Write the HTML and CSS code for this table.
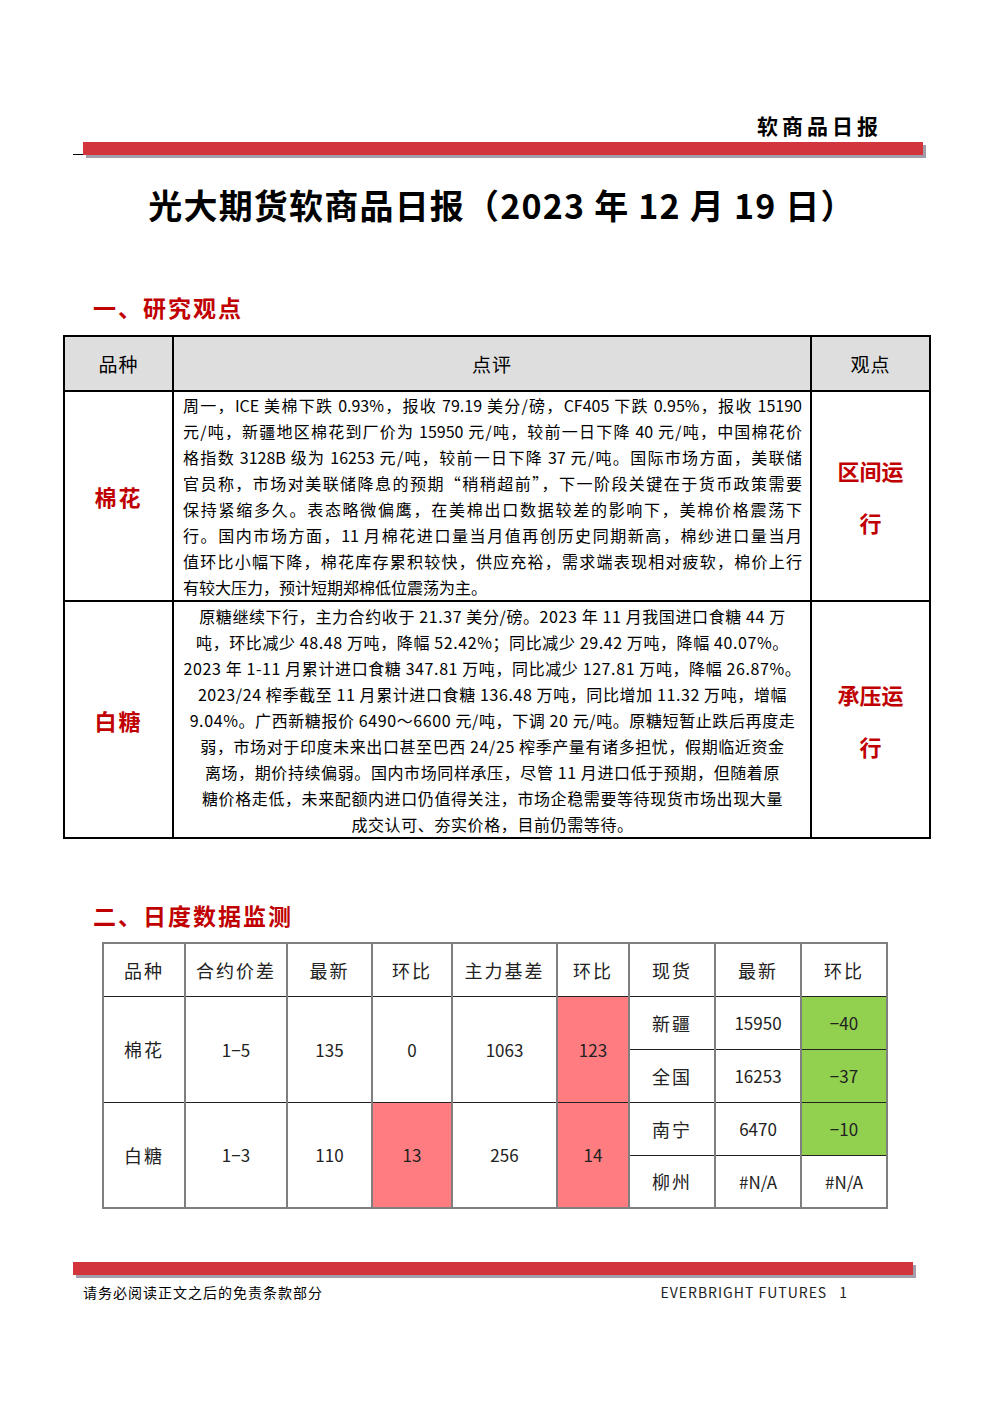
FILE: index.html
```html
<!DOCTYPE html>
<html lang="zh-CN">
<head>
  <meta charset="UTF-8" />
  <meta name="viewport" content="width=device-width, initial-scale=1.0"/>
  <title>光大期货软商品日报</title>
  <link rel="stylesheet" href="styles.css">
</head>
<body>
  <div class="page">
    <!-- Page header -->
    <header class="page-header">
      <div class="report-tag">软商品日报</div>
      <div class="bar-row">
        <span class="bar-dash"></span>
        <div class="red-bar"></div>
      </div>
    </header>

    <h1 class="title">光大期货软商品日报（2023 年 12 月 19 日）</h1>

    <!-- Research view -->
    <h2 class="section-title">一、研究观点</h2>
    <table class="view-table">
      <colgroup>
        <col class="col-kind">
        <col class="col-comment">
        <col class="col-view">
      </colgroup>
      <thead>
        <tr>
          <th>品种</th>
          <th>点评</th>
          <th>观点</th>
        </tr>
      </thead>
      <tbody>
        <tr class="row-cotton">
          <td class="kind">棉花</td>
          <td class="comment justify">
            <span>周一，ICE 美棉下跌 0.93%，报收 79.19 美分/磅，CF405 下跌 0.95%，报收 15190</span>
            <span>元/吨，新疆地区棉花到厂价为 15950 元/吨，较前一日下降 40 元/吨，中国棉花价</span>
            <span>格指数 3128B 级为 16253 元/吨，较前一日下降 37 元/吨。国际市场方面，美联储</span>
            <span>官员称，市场对美联储降息的预期“稍稍超前”，下一阶段关键在于货币政策需要</span>
            <span>保持紧缩多久。表态略微偏鹰，在美棉出口数据较差的影响下，美棉价格震荡下</span>
            <span>行。国内市场方面，11 月棉花进口量当月值再创历史同期新高，棉纱进口量当月</span>
            <span>值环比小幅下降，棉花库存累积较快，供应充裕，需求端表现相对疲软，棉价上行</span>
            <span class="last">有较大压力，预计短期郑棉低位震荡为主。</span>
          </td>
          <td class="view">区间运<br>行</td>
        </tr>
        <tr class="row-sugar">
          <td class="kind">白糖</td>
          <td class="comment centered">
            <span>原糖继续下行，主力合约收于 21.37 美分/磅。2023 年 11 月我国进口食糖 44 万</span>
            <span>吨，环比减少 48.48 万吨，降幅 52.42%；同比减少 29.42 万吨，降幅 40.07%。</span>
            <span>2023 年 1-11 月累计进口食糖 347.81 万吨，同比减少 127.81 万吨，降幅 26.87%。</span>
            <span>2023/24 榨季截至 11 月累计进口食糖 136.48 万吨，同比增加 11.32 万吨，增幅</span>
            <span>9.04%。广西新糖报价 6490～6600 元/吨，下调 20 元/吨。原糖短暂止跌后再度走</span>
            <span>弱，市场对于印度未来出口甚至巴西 24/25 榨季产量有诸多担忧，假期临近资金</span>
            <span>离场，期价持续偏弱。国内市场同样承压，尽管 11 月进口低于预期，但随着原</span>
            <span>糖价格走低，未来配额内进口仍值得关注，市场企稳需要等待现货市场出现大量</span>
            <span>成交认可、夯实价格，目前仍需等待。</span>
          </td>
          <td class="view">承压运<br>行</td>
        </tr>
      </tbody>
    </table>

    <!-- Daily data -->
    <h2 class="section-title second">二、日度数据监测</h2>
    <table class="data-table">
      <colgroup>
        <col style="width: 82px">
        <col style="width: 102px">
        <col style="width: 85px">
        <col style="width: 80px">
        <col style="width: 105px">
        <col style="width: 72px">
        <col style="width: 86px">
        <col style="width: 86px">
        <col style="width: 86px">
      </colgroup>
      <thead>
        <tr>
          <th>品种</th>
          <th>合约价差</th>
          <th>最新</th>
          <th>环比</th>
          <th>主力基差</th>
          <th>环比</th>
          <th>现货</th>
          <th>最新</th>
          <th>环比</th>
        </tr>
      </thead>
      <tbody>
        <tr>
          <td rowspan="2" class="cn">棉花</td>
          <td rowspan="2">1−5</td>
          <td rowspan="2">135</td>
          <td rowspan="2">0</td>
          <td rowspan="2">1063</td>
          <td rowspan="2" class="up">123</td>
          <td class="cn">新疆</td>
          <td>15950</td>
          <td class="down">−40</td>
        </tr>
        <tr>
          <td class="cn">全国</td>
          <td>16253</td>
          <td class="down">−37</td>
        </tr>
        <tr>
          <td rowspan="2" class="cn">白糖</td>
          <td rowspan="2">1−3</td>
          <td rowspan="2">110</td>
          <td rowspan="2" class="up">13</td>
          <td rowspan="2">256</td>
          <td rowspan="2" class="up">14</td>
          <td class="cn">南宁</td>
          <td>6470</td>
          <td class="down">−10</td>
        </tr>
        <tr>
          <td class="cn">柳州</td>
          <td>#N/A</td>
          <td>#N/A</td>
        </tr>
      </tbody>
    </table>

    <!-- Footer -->
    <footer class="page-footer">
      <div class="red-bar footer-bar"></div>
      <div class="footer-text">
        <span class="notice">请务必阅读正文之后的免责条款部分</span>
        <span class="brand">EVERBRIGHT FUTURES<span class="page-no">1</span></span>
      </div>
    </footer>
  </div>
</body>
</html>
```

FILE: styles.css
```css
* {
  box-sizing: border-box;
  margin: 0;
  padding: 0;
}

body {
  font-family: "Noto Sans CJK SC", "Noto Sans", sans-serif;
  background: #fff;
  color: #000;
}

.page {
  width: 992px;
  min-height: 1403px;
  padding-top: 112px;
}

/* Header */
.report-tag {
  text-align: right;
  padding-right: 110px;
  font-size: 21px;
  line-height: 26px;
  font-weight: bold;
  letter-spacing: 4px;
}

.bar-row {
  display: flex;
  align-items: flex-end;
  margin-top: 4px;
  padding-left: 73px;
}

.bar-dash {
  width: 10px;
  height: 1px;
  background: #000;
}

.red-bar {
  width: 840px;
  height: 13px;
  background: #d2363c;
  box-shadow: 3px 3px 0 #a29dab;
}

.title {
  margin-top: 28px;
  padding-left: 12px;
  text-align: center;
  font-size: 34px;
  line-height: 44px;
  font-weight: bold;
  letter-spacing: 1.2px;
}

.section-title {
  margin: 65px 0 13px 93px;
  font-size: 23px;
  line-height: 30px;
  font-weight: bold;
  letter-spacing: 2px;
  color: #c00000;
}

.section-title.second {
  margin-top: 61px;
  margin-bottom: 12px;
}

/* Research view table */
.view-table {
  margin-left: 63px;
  width: 866px;
  border-collapse: collapse;
  table-layout: fixed;
}

.col-kind { width: 109px; }
.col-comment { width: 638px; }
.col-view { width: 119px; }

.view-table th,
.view-table td {
  border: 2px solid #000;
}

.view-table th {
  height: 55px;
  background: #dedede;
  font-size: 19px;
  font-weight: normal;
  letter-spacing: 1px;
}

.view-table .kind {
  text-align: center;
  font-size: 22px;
  font-weight: bold;
  letter-spacing: 2px;
  color: #c00000;
}

.view-table .view {
  text-align: center;
  font-size: 22px;
  line-height: 52px;
  font-weight: bold;
  color: #c00000;
}

.comment {
  padding: 0 8px 0 9px;
  font-size: 16px;
  line-height: 26px;
}

.comment span {
  display: block;
  white-space: nowrap;
}

.justify span {
  text-align: justify;
  text-align-last: justify;
}

.justify span.last {
  text-align-last: left;
}

.centered span {
  text-align: center;
  letter-spacing: 0.6px;
}

.row-cotton td { height: 210px; }
.row-sugar td { height: 237px; }

/* Daily data table */
.data-table {
  margin-left: 102px;
  width: 784px;
  border-collapse: collapse;
  table-layout: fixed;
}

.data-table th,
.data-table td {
  height: 53px;
  border-top: 1px solid #222;
  border-bottom: 1px solid #222;
  border-left: 2px solid #7f7f7f;
  border-right: 2px solid #7f7f7f;
  text-align: center;
  font-size: 17px;
  color: #222;
}

.data-table thead th {
  border-top: 2px solid #7f7f7f;
  font-size: 18px;
  font-weight: normal;
  letter-spacing: 2px;
}

.data-table tbody tr:last-child td,
.data-table td[rowspan] {
  border-bottom: 2px solid #7f7f7f;
}

.data-table tbody tr:first-child td[rowspan] {
  border-bottom: 1px solid #222;
}

.data-table .cn {
  font-size: 18px;
  letter-spacing: 2px;
}

.data-table .up {
  background: #ff7c80;
}

.data-table .down {
  background: #92d050;
}

/* Footer */
.page-footer {
  margin-top: 53px;
  padding-left: 73px;
}

.footer-text {
  display: flex;
  justify-content: space-between;
  width: 765px;
  margin: 7px 0 0 10px;
  font-size: 14px;
  line-height: 20px;
}

.notice {
  letter-spacing: 1px;
}

.brand {
  font-size: 14px;
  letter-spacing: 1px;
  color: #222;
}

.page-no {
  margin-left: 12px;
}
```
